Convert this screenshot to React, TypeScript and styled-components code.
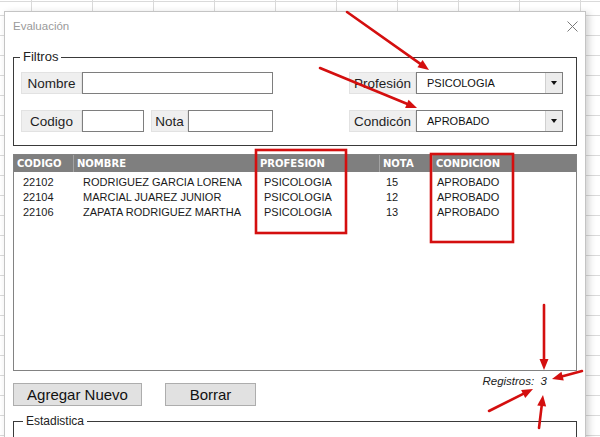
import styled, { createGlobalStyle } from 'styled-components';

const GlobalStyle = createGlobalStyle`
  html, body {
    margin: 0;
    padding: 0;
  }
  body {
    width: 600px;
    height: 437px;
    overflow: hidden;
    font-family: "Liberation Sans", Arial, sans-serif;
    background-color: #fff;
    background-image:
      linear-gradient(#dadada, #dadada),
      repeating-linear-gradient(to bottom, transparent 0, transparent 15px, #dadada 15px, #dadada 16px, transparent 16px, transparent 20px),
      repeating-linear-gradient(to right, transparent 0, transparent 31px, #dadada 31px, #dadada 32px, transparent 32px, transparent 61px);
    background-size: 100% 1px, 100% 20px, 61px 100%;
    background-position: 0 1px, 0 0, 0 0;
    background-repeat: no-repeat, repeat, repeat;
  }
`;

const Page = styled.div`
  box-sizing: border-box;
  height: 437px;
  padding: 11px 0 0 4px;
  overflow: hidden;
`;

const Dialog = styled.div`
  width: 582px;
  box-sizing: border-box;
  background: #fff;
  border: 1px solid #c4c4c4;
  box-shadow: 3px 2px 7px rgba(0, 0, 0, 0.18);
  padding-bottom: 40px;
`;

const TitleBar = styled.div`
  display: flex;
  align-items: center;
  justify-content: space-between;
  height: 28px;
  padding: 0 7px 0 8px;
`;

const Title = styled.span`
  font-size: 11.5px;
  color: #9a9a9a;
`;

const Content = styled.div`
  padding: 10px 8px 0;
`;

const Frame = styled.fieldset<{ $pad: string; $height?: number }>`
  margin: 0;
  min-width: 0;
  border: 1px solid #3a3a3a;
  padding: ${(p) => p.$pad};
  ${(p) => (p.$height ? `height: ${p.$height}px;` : '')}
`;

const Legend = styled.legend<{ $size: number; $offset: number }>`
  font-size: ${(p) => p.$size}px;
  line-height: 14px;
  padding: 0 3px;
  margin-left: ${(p) => p.$offset}px;
  color: #222;
`;

const FilterRow = styled.div`
  display: flex;
  justify-content: space-between;
  height: 22px;
  & + & {
    margin-top: 16px;
  }
`;

const Group = styled.div`
  display: flex;
  align-items: stretch;
`;

const Label = styled.span<{ $w: number; $gap?: number }>`
  box-sizing: border-box;
  width: ${(p) => p.$w}px;
  margin-left: ${(p) => p.$gap || 0}px;
  display: flex;
  align-items: center;
  justify-content: center;
  background: #efefef;
  border: 1px solid #e2e2e2;
  font-size: 13.5px;
  color: #1e1e1e;
`;

const Input = styled.span<{ $w: number }>`
  box-sizing: border-box;
  width: ${(p) => p.$w}px;
  background: #fff;
  border: 1px solid #7e7e7e;
`;

const Select = styled.span`
  box-sizing: border-box;
  width: 147px;
  display: flex;
  align-items: center;
  justify-content: space-between;
  background: #fff;
  border: 1px solid #7e7e7e;
  padding-left: 10px;
  font-size: 11px;
  color: #111;
`;

const DropButton = styled.span`
  box-sizing: border-box;
  width: 17px;
  height: 100%;
  display: flex;
  align-items: center;
  justify-content: center;
  background: #ececec;
  border-left: 1px solid #d0d0d0;
  &::after {
    content: '';
    border-left: 3px solid transparent;
    border-right: 3px solid transparent;
    border-top: 4px solid #111;
  }
`;

const ListBox = styled.div`
  margin-top: 8px;
  height: 217px;
  box-sizing: border-box;
  border: 1px solid #828282;
  overflow: hidden;
`;

const HeaderRow = styled.div`
  display: grid;
  grid-template-columns: 59px 183px 123px 53px 1fr;
  height: 17px;
  background: #7f7f7f;
`;

const HeaderCell = styled.span`
  padding-left: 3px;
  font-family: "DejaVu Sans", Verdana, sans-serif;
  font-weight: bold;
  font-size: 10px;
  line-height: 17px;
  color: #fff;
  & + & {
    border-left: 1px solid #a3a3a3;
  }
`;

const Rows = styled.div`
  padding: 3px 0 0 9px;
`;

const DataRow = styled.div`
  display: grid;
  grid-template-columns: 60px 181px 122px 51px 1fr;
  font-size: 11px;
  line-height: 15px;
  color: #1a1a1a;
`;

const BottomRow = styled.div`
  display: flex;
  align-items: flex-start;
  margin-top: 4px;
`;

const Button = styled.button<{ $w: number; $gap?: number }>`
  width: ${(p) => p.$w}px;
  height: 23px;
  margin: 8px 0 0 ${(p) => p.$gap || 0}px;
  padding: 0;
  background: #e1e1e1;
  border: 1px solid #adadad;
  font-family: "Liberation Sans", Arial, sans-serif;
  font-size: 15px;
  color: #111;
`;

const Registros = styled.span`
  margin: 0 30px 0 auto;
  font-size: 11.5px;
  line-height: 13px;
  font-style: italic;
  white-space: pre;
  color: #222;
`;

const Estadistica = styled.div`
  margin-top: 8px;
`;

const Overlay = styled.svg`
  position: fixed;
  left: 0;
  top: 0;
  width: 600px;
  height: 437px;
  pointer-events: none;
`;

const RED = '#d40f0f';

const Arrow = ({ x1, y1, x2, y2 }: { x1: number; y1: number; x2: number; y2: number }) => {
  const a = Math.atan2(y2 - y1, x2 - x1);
  const len = 11;
  const half = 4.5;
  const bx = x2 - len * Math.cos(a);
  const by = y2 - len * Math.sin(a);
  const px = -Math.sin(a) * half;
  const py = Math.cos(a) * half;
  return (
    <g>
      <line x1={x1} y1={y1} x2={bx} y2={by} stroke={RED} strokeWidth={2.6} strokeLinecap="round" />
      <polygon points={`${x2},${y2} ${bx + px},${by + py} ${bx - px},${by - py}`} fill={RED} />
    </g>
  );
};

const students = [
  { code: '22102', name: 'RODRIGUEZ GARCIA LORENA', prof: 'PSICOLOGIA', nota: '15', cond: 'APROBADO' },
  { code: '22104', name: 'MARCIAL JUAREZ JUNIOR', prof: 'PSICOLOGIA', nota: '12', cond: 'APROBADO' },
  { code: '22106', name: 'ZAPATA RODRIGUEZ MARTHA', prof: 'PSICOLOGIA', nota: '13', cond: 'APROBADO' },
];

const App: React.FC = () => {
  return (
    <>
      <GlobalStyle />
      <Page>
        <Dialog>
          <TitleBar>
            <Title>Evaluación</Title>
            <svg width="11" height="11" viewBox="0 0 11 11">
              <path d="M0.5 0.5 L10.5 10.5 M10.5 0.5 L0.5 10.5" stroke="#7a7a7a" strokeWidth="1" />
            </svg>
          </TitleBar>
          <Content>
            <Frame $pad="8px 13px 13px 7px">
              <Legend $size={13} $offset={-1}>Filtros</Legend>
              <FilterRow>
                <Group>
                  <Label $w={61}>Nombre</Label>
                  <Input $w={191} />
                </Group>
                <Group>
                  <Label $w={67}>Profesión</Label>
                  <Select>
                    PSICOLOGIA
                    <DropButton />
                  </Select>
                </Group>
              </FilterRow>
              <FilterRow>
                <Group>
                  <Label $w={61}>Codigo</Label>
                  <Input $w={62} />
                  <Label $w={37} $gap={7}>Nota</Label>
                  <Input $w={85} />
                </Group>
                <Group>
                  <Label $w={67}>Condicón</Label>
                  <Select>
                    APROBADO
                    <DropButton />
                  </Select>
                </Group>
              </FilterRow>
            </Frame>

            <ListBox>
              <HeaderRow>
                <HeaderCell>CODIGO</HeaderCell>
                <HeaderCell>NOMBRE</HeaderCell>
                <HeaderCell>PROFESION</HeaderCell>
                <HeaderCell>NOTA</HeaderCell>
                <HeaderCell>CONDICION</HeaderCell>
              </HeaderRow>
              <Rows>
                {students.map((s) => (
                  <DataRow key={s.code}>
                    <span>{s.code}</span>
                    <span>{s.name}</span>
                    <span>{s.prof}</span>
                    <span>{s.nota}</span>
                    <span>{s.cond}</span>
                  </DataRow>
                ))}
              </Rows>
            </ListBox>

            <BottomRow>
              <Button $w={129}>Agregar Nuevo</Button>
              <Button $w={91} $gap={23}>Borrar</Button>
              <Registros>{'Registros:  3'}</Registros>
            </BottomRow>

            <Estadistica>
              <Frame $pad="0" $height={60}>
                <Legend $size={12} $offset={9}>Estadistica</Legend>
              </Frame>
            </Estadistica>
          </Content>
        </Dialog>
      </Page>

      <Overlay viewBox="0 0 600 437">
        <rect x={256} y={150} width={90} height={83} fill="none" stroke={RED} strokeWidth={2.6} />
        <rect x={431} y={154} width={82} height={88} fill="none" stroke={RED} strokeWidth={2.6} />
        <Arrow x1={347} y1={12} x2={429} y2={70} />
        <Arrow x1={320} y1={68} x2={417} y2={108} />
        <Arrow x1={544} y1={305} x2={544} y2={370} />
        <Arrow x1={582} y1={371} x2={552} y2={379} />
        <Arrow x1={489} y1={411} x2={533} y2={389} />
        <Arrow x1={539} y1={428} x2={543} y2={395} />
      </Overlay>
    </>
  );
};

export default App;
